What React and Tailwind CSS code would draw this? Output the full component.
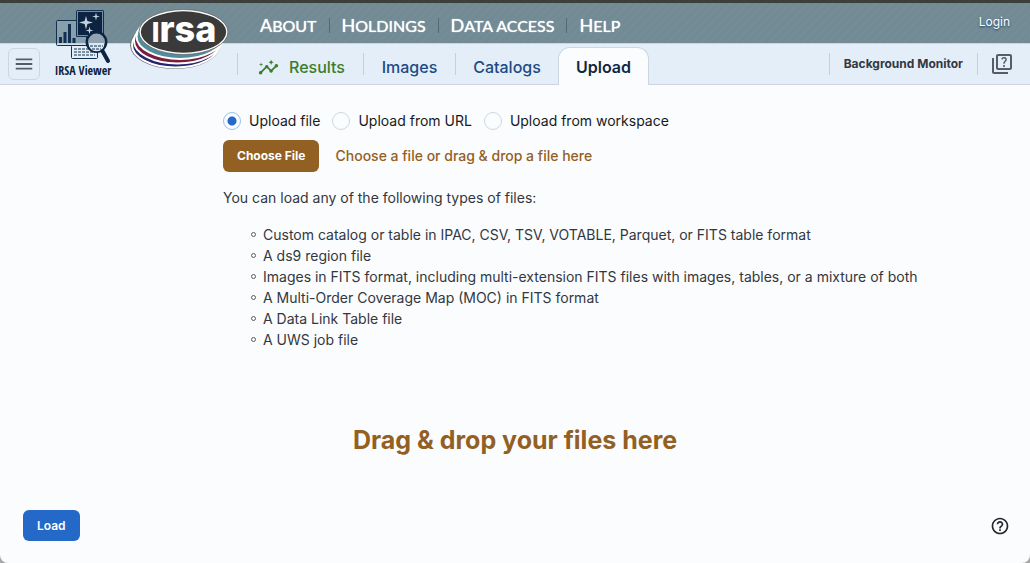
import { useState } from "react";
import { MdInsights, MdOutlineQuiz, MdHelpOutline, MdMenu } from "react-icons/md";

const NAV = [
  ["A", "BOUT"],
  ["H", "OLDINGS"],
  ["D", "ATA ACCESS"],
  ["H", "ELP"],
];

const SOURCES = ["Upload file", "Upload from URL", "Upload from workspace"];

const FILE_TYPES = [
  "Custom catalog or table in IPAC, CSV, TSV, VOTABLE, Parquet, or FITS table format",
  "A ds9 region file",
  "Images in FITS format, including multi-extension FITS files with images, tables, or a mixture of both",
  "A Multi-Order Coverage Map (MOC) in FITS format",
  "A Data Link Table file",
  "A UWS job file",
];

function ViewerLogo() {
  return (
    <svg viewBox="0 0 60 76" className="h-[76px] w-[60px] overflow-visible" role="img" aria-label="IRSA Viewer">
      <rect x="3.5" y="13.5" width="30" height="25" rx="1" fill="#b3c5d3" fillOpacity="0.35" stroke="#12304f" />
      <path d="M6 36h3v-6H6zM10.5 36h3v-11h-3zM15 36h3v-19h-3zM19.500 36h3v-5h-3z" fill="#12304f" />
      <rect x="18.500" y="38.500" width="26" height="13" rx="1" fill="#e4eef9" stroke="#12304f" />
      <path d="M21 42h21M21 45h21M21 48h21" stroke="#12304f" strokeDasharray="3 1" />
      <rect x="23" y="3" width="28" height="27" rx="1.5" fill="#12304f" />
      <rect x="24.500" y="4.500" width="25" height="24" fill="#0c2342" stroke="#8fa6b6" strokeWidth="0.800" />
      <path d="M33 9l1.400 5.100L40 15.500l-5.600 1.400L33 22.500l-1.400-5.600L26 15.500l5.600-1.400zM43 5.500l.8 3.200L47 9.500l-3.200.8-.8 3.200-.8-3.200L39 9.500l3.200-.8zM36.500 19.500l.8 3.200 3.200.8-3.200.8-.8 3.200-.8-3.200-3.200-.8 3.200-.8z" fill="#c3d3dd" />
      <circle cx="43.500" cy="35" r="9.700" fill="#8fa3b1" stroke="#0c2342" strokeWidth="2.400" />
      <path d="M36 36h15v3a8 8 0 0 1-15 0z" fill="#dce7f2" />
      <path d="M37 39h13M39 42h9" stroke="#12304f" strokeDasharray="3 1" />
      <path d="M49.500 44l5.500 10" stroke="#0c2342" strokeWidth="4" strokeLinecap="round" />
      <text x="30" y="68" textAnchor="middle" fontFamily="'Liberation Sans Narrow', 'Open Sans Condensed', 'DejaVu Sans Condensed', sans-serif" fontWeight="700" fontSize="12" fill="#0c2342">
        IRSA Viewer
      </text>
    </svg>
  );
}

function IrsaLogo() {
  return (
    <svg viewBox="0 0 100 62" className="h-[62px] w-[100px] overflow-visible" role="img" aria-label="irsa">
      <ellipse cx="45" cy="37" rx="45" ry="24" fill="#777777" />
      <g stroke="#ffffff" strokeWidth="2">
        <ellipse cx="45.500" cy="37" rx="43.500" ry="22.500" fill="#25246f" />
        <ellipse cx="47.500" cy="33" rx="43.500" ry="22.500" fill="#7a1c3b" />
        <ellipse cx="50" cy="28.500" rx="43.500" ry="22.500" fill="#508c9b" />
      </g>
      <ellipse cx="53.500" cy="24" rx="44.500" ry="22.500" fill="#ffffff" stroke="#666666" strokeWidth="0.800" />
      <ellipse cx="53.500" cy="24" rx="42.700" ry="20.700" fill="#3a3a3a" />
      <text x="54" y="34" textAnchor="middle" fontFamily="Inter, sans-serif" fontWeight="800" fontSize="36" fill="#ffffff">
        <tspan fontSize="27">I</tspan>
        <tspan>rsa</tspan>
      </text>
    </svg>
  );
}

function Header() {
  return (
    <header className="relative">
      <div className="flex h-[43px] items-center justify-between border-t-[3px] border-[#3d3f3c] bg-[#718a94] bg-[repeating-linear-gradient(135deg,rgba(255,255,255,0.02)_0_3px,transparent_3px_6px)] pr-5 pl-[248px]">
        <nav className="flex items-center divide-x divide-[#526a74] pt-1" aria-label="Site">
          {NAV.map(([initial, rest]) => (
            <a
              key={initial + rest}
              href="#"
              className="px-3 font-[Lato,sans-serif] text-base leading-[14px] whitespace-nowrap text-white [text-shadow:0_0_1px_#ffffff]"
            >
              <span className="text-lg leading-[14px]">{initial}</span>
              {rest}
            </a>
          ))}
        </nav>
        <a href="#" className="pb-0.5 text-xs text-white [text-shadow:0_1px_2px_#1c3a6b]">
          Login
        </a>
      </div>

      <div className="flex h-[42px] items-center border-y border-[#ccd6e2] bg-[#e4eef9] pr-4 pl-2">
        <button type="button" aria-label="Menu" className="flex size-8 items-center justify-center rounded-md border border-[#cdd7e1] text-[#555e68]">
          <MdMenu className="size-[22px]" />
        </button>
        <div role="tablist" className="ml-[197px] flex h-full items-center text-base font-medium text-[#204a83]">
          <button type="button" role="tab" aria-selected="false" className="flex h-[22px] w-[126px] items-center gap-2.5 border-l border-[#c5d0dc] pt-1.5 pl-5 text-[#3b7d2b]">
            <MdInsights className="size-[21px]" />
            Results
          </button>
          <button type="button" role="tab" aria-selected="false" className="flex h-[22px] w-[92px] items-center justify-center border-l border-[#c5d0dc] pt-1.5">
            Images
          </button>
          <button type="button" role="tab" aria-selected="false" className="flex h-[22px] w-[103px] items-center justify-center border-l border-[#c5d0dc] pt-1.5">
            Catalogs
          </button>
          <button type="button" role="tab" aria-selected="true" className="-mb-px h-[38px] w-[91px] self-end rounded-t-xl border border-b-0 border-[#ccd6e2] bg-[#fbfcfe] font-semibold text-[#12283f]">
            Upload
          </button>
        </div>
        <div className="ml-auto flex items-center text-[#555e68]">
          <button type="button" className="h-[22px] border-x border-[#c5d0dc] px-3.5 text-xs font-bold text-[#32383e]">
            Background Monitor
          </button>
          <button type="button" aria-label="Help topics" className="pl-3">
            <MdOutlineQuiz className="size-6" />
          </button>
        </div>
      </div>

      <div className="absolute top-[7px] left-[53px]">
        <ViewerLogo />
      </div>
      <div className="absolute top-2 left-[130px]">
        <IrsaLogo />
      </div>
    </header>
  );
}

export default function App() {
  const [source, setSource] = useState(SOURCES[0]);

  return (
    <div className="min-h-screen bg-[#a8a8a8] font-[Inter,sans-serif]">
      <div className="flex min-h-screen flex-col rounded-b-lg bg-[#fbfcfe] text-[#32383e]">
        <Header />
        <main className="flex flex-1 flex-col">
          <section className="pt-[26px] pl-[223px] text-sm">
            <div role="radiogroup" aria-label="Upload source" className="flex h-5 items-center gap-3">
              {SOURCES.map((name) => (
                <label key={name} className="flex items-center gap-2 text-[#171a1c]">
                  <input
                    type="radio"
                    name="source"
                    checked={source === name}
                    onChange={() => setSource(name)}
                    className="size-[18px] appearance-none rounded-full border border-[#cdd7e1] bg-[#fbfcfe] checked:border-[#97c3f0] checked:bg-[radial-gradient(circle,#2468c8_0_4px,transparent_5px)]"
                  />
                  {name}
                </label>
              ))}
            </div>
            <div className="mt-[9px] flex items-center gap-4">
              <button type="button" className="h-8 rounded-md bg-[#936023] px-3.5 text-xs font-bold text-white">
                Choose File
              </button>
              <span className="font-medium text-[#936023]">Choose a file or drag &amp; drop a file here</span>
            </div>
            <p className="mt-4 leading-5">You can load any of the following types of files:</p>
            <ul className="mt-4 pl-7 leading-[21px]">
              {FILE_TYPES.map((type) => (
                <li
                  key={type}
                  className="flex items-center gap-[7px] before:size-[5px] before:shrink-0 before:rounded-full before:border before:border-[#555e68]"
                >
                  {type}
                </li>
              ))}
            </ul>
          </section>
          <p className="mt-[72px] text-center text-[25px] leading-9 font-bold text-[#936023]">Drag &amp; drop your files here</p>
          <footer className="mt-auto flex items-center justify-between pr-5 pb-[22px] pl-[23px]">
            <button type="button" className="h-[31px] rounded-md bg-[#2468c8] px-3.5 text-xs font-semibold text-white">
              Load
            </button>
            <button type="button" aria-label="Help">
              <MdHelpOutline className="size-5 text-[#25282c]" />
            </button>
          </footer>
        </main>
      </div>
    </div>
  );
}
